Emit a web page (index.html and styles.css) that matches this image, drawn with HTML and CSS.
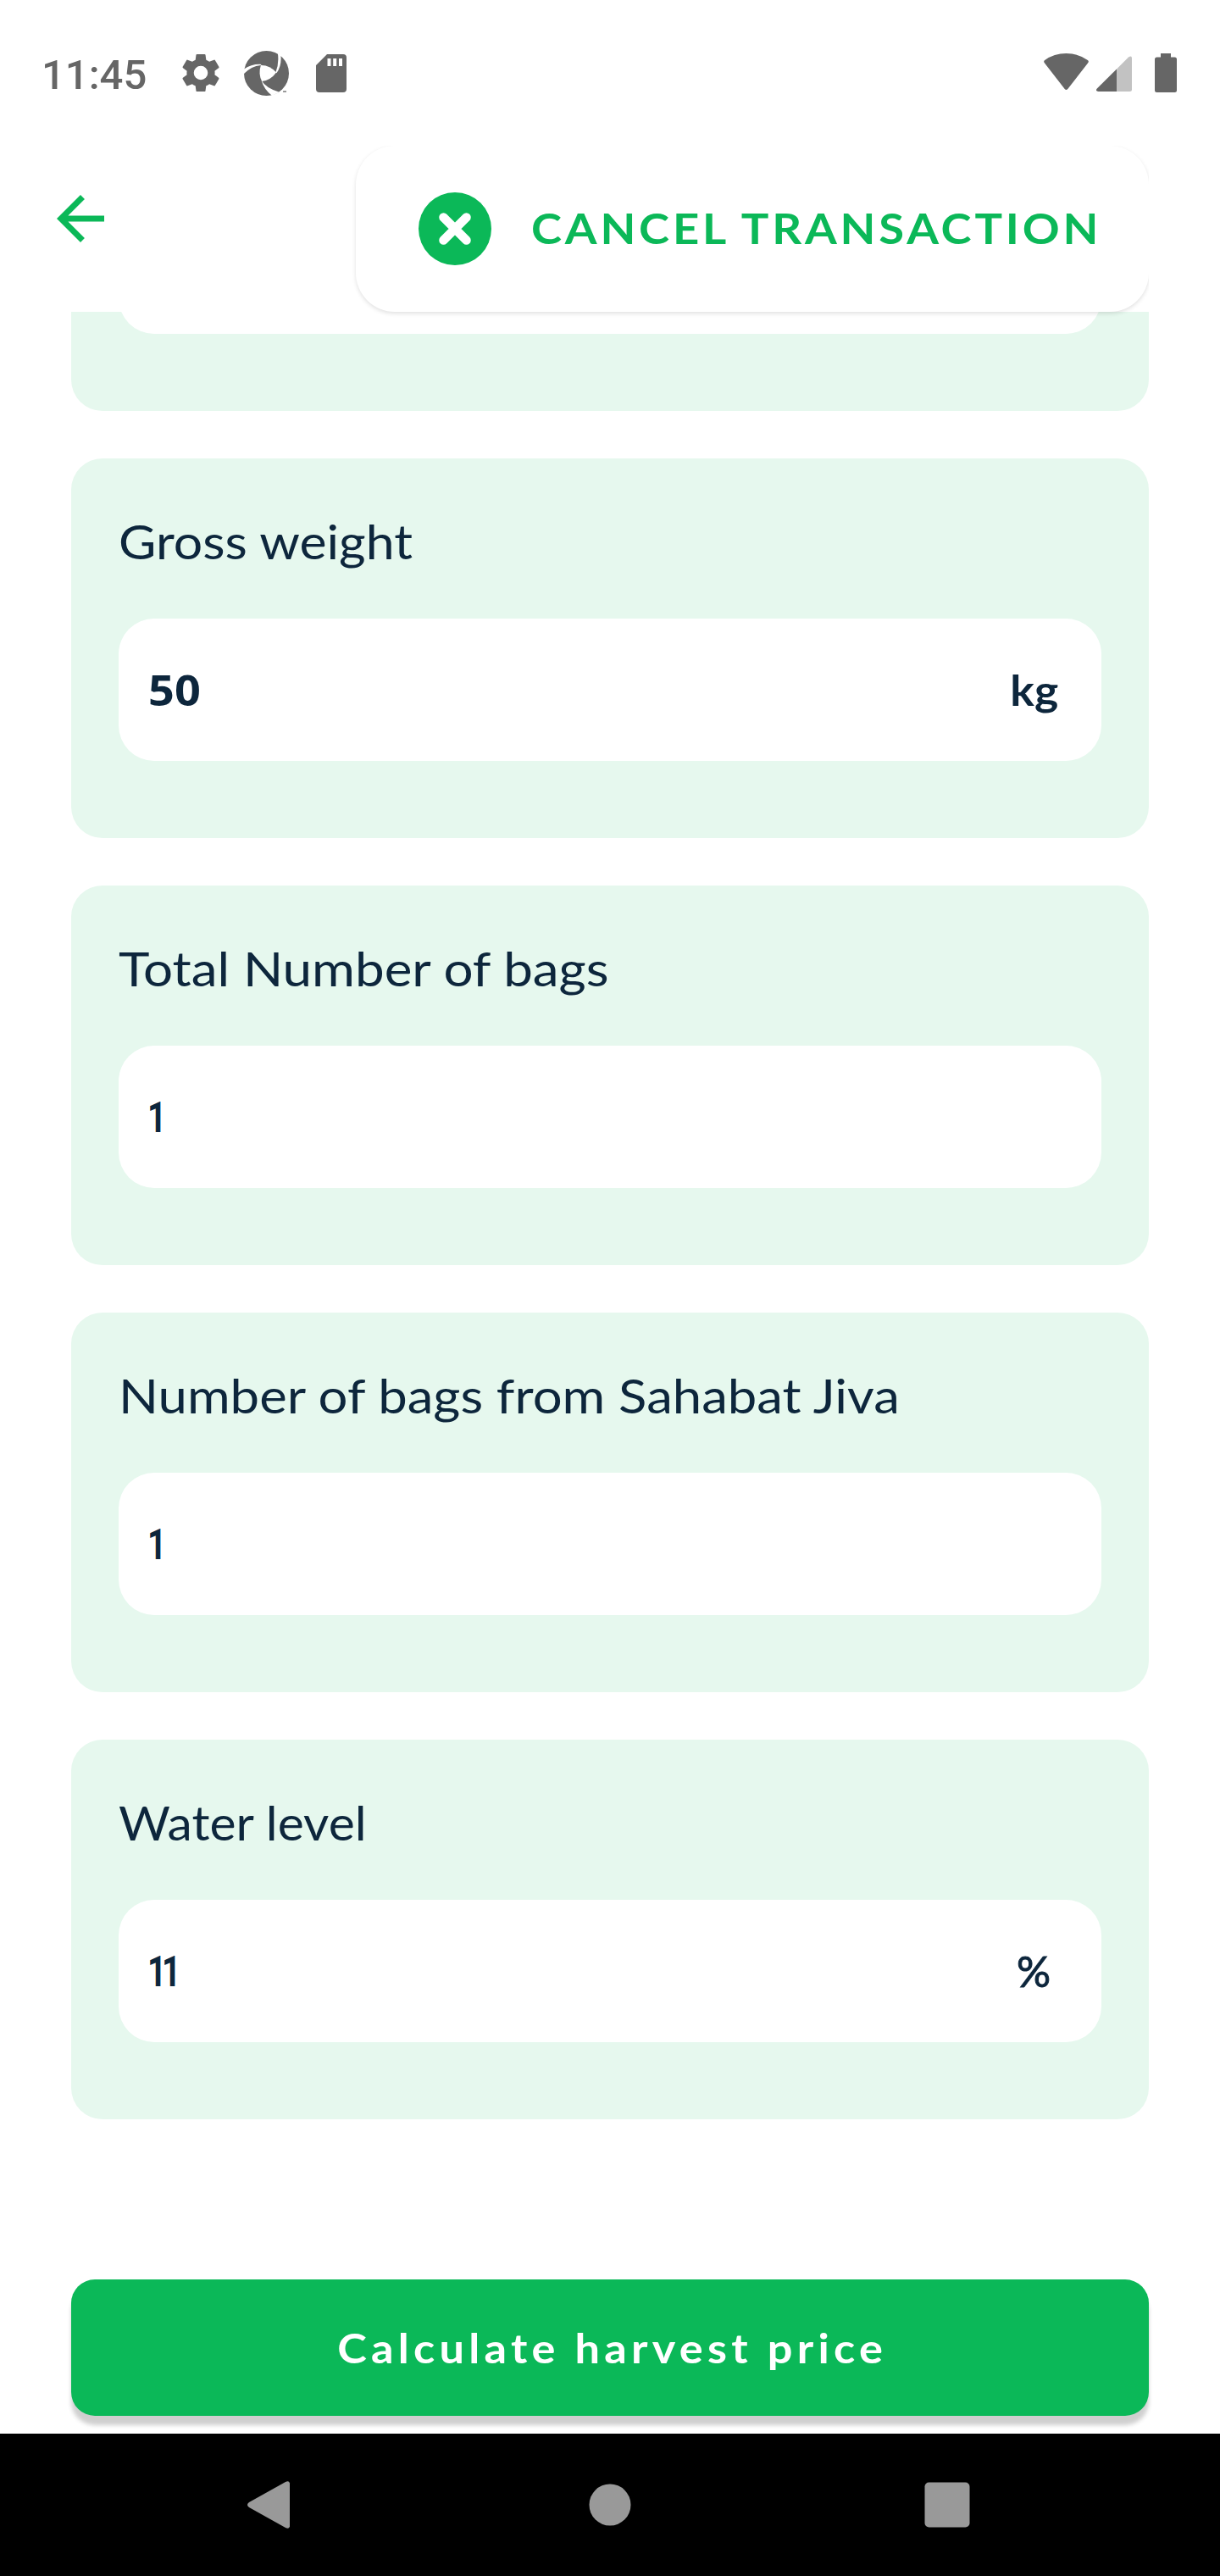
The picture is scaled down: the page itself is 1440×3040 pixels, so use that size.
FILE: index.html
```html
<!DOCTYPE html>
<html lang="en">
<head>
<meta charset="utf-8">
<title>Harvest transaction</title>
<link rel="stylesheet" href="styles.css">
</head>
<body>
<div class="screen">
  <header class="status">
    <span class="clock">11:45</span>
    <svg class="gear" viewBox="2 2 20 20"><path d="M19.14 12.94c.04-.3.06-.61.06-.94s-.02-.64-.07-.94l2.03-1.58a.49.49 0 0 0 .12-.61l-1.92-3.32a.488.488 0 0 0-.59-.22l-2.39.96c-.5-.38-1.03-.7-1.62-.94L14.4 2.81a.484.484 0 0 0-.48-.41h-3.84a.47.47 0 0 0-.47.41l-.36 2.54c-.59.24-1.13.57-1.62.94l-2.39-.96a.48.48 0 0 0-.59.22L2.74 8.87c-.12.21-.08.47.12.61l2.03 1.58c-.05.3-.09.63-.09.94s.02.64.07.94l-2.03 1.58a.49.49 0 0 0-.12.61l1.92 3.32c.12.22.37.29.59.22l2.39-.96c.5.38 1.03.7 1.62.94l.36 2.54c.05.24.24.41.48.41h3.84c.24 0 .44-.17.47-.41l.36-2.54c.59-.24 1.13-.56 1.62-.94l2.39.96c.22.08.47 0 .59-.22l1.92-3.32a.48.48 0 0 0-.12-.61zM12 15.6a3.6 3.6 0 1 1 0-7.2 3.6 3.6 0 0 1 0 7.2z"/></svg>
    <svg class="rotor" viewBox="0 0 160 160"><circle cx="80" cy="80" r="80"/><path class="cut" d="M60 51Q92 50 115 77Q96 104 64 109Q50 82 60 51Z"/><path class="cut" d="M-2 66Q26 46 62 48L60 51Q24 54-2 84ZM120 6L131 16Q135 53 116 79L113 76Q126 44 120 6ZM62 106Q80 135 126 147L100 160Q72 139 62 106Z"/><path d="M139 143h12v4h-12z"/></svg>
    <svg class="card-icon" viewBox="0 0 36 45"><path fill-rule="evenodd" d="M13 0H32a4 4 0 0 1 4 4V41a4 4 0 0 1-4 4H4a4 4 0 0 1-4-4V13ZM13.500 5v9h4V5ZM20.200 5v9h4V5ZM27 5v9h4V5Z"/></svg>
    <span class="spacer"></span>
    <svg class="wifi" viewBox="0 0 53 43"><path d="M1 11.500Q-.8 9.500 1.200 8Q12 0 26.500 0T51.800 8Q53.800 9.500 52 11.500L28.300 42Q26.500 43.800 24.700 42Z"/></svg>
    <svg class="signal" viewBox="0 0 42 42"><path class="weak" d="M24 15.500 38 1.500Q42-1 42 3V39.500Q42 42 39.500 42H24Z"/><path d="M24 15.500V42H2.500Q-1.500 41.500.8 38.500Z"/></svg>
    <svg class="battery" viewBox="0 0 26 46"><path d="M7 0H19V4.500H23.500Q26 4.500 26 7V43.500Q26 46 23.500 46H2.500Q0 46 0 43.500V7Q0 4.500 2.500 4.500H7Z"/></svg>
  </header>

  <nav class="toolbar">
    <svg class="back" viewBox="0 0 24 24"><path d="M20 11H7.830l5.590-5.590L12 4l-8 8 8 8 1.410-1.410L7.830 13H20z"/></svg>
    <div class="cancel-wrap">
      <button class="cancel">
        <svg class="close" viewBox="0 0 86 86"><circle cx="43" cy="43" r="43"/><path d="M29.500 29.500 56.500 56.500M56.500 29.500 29.500 56.500"/></svg>
        <span class="cancel-text">CANCEL TRANSACTION</span>
      </button>
    </div>
  </nav>

  <main class="list">
    <section class="card clipped"><div class="field"></div></section>
    <section class="card">
      <h2 class="gross">Gross weight</h2>
      <div class="field"><b class="num">50</b><b class="kg">kg</b></div>
    </section>
    <section class="card">
      <h2 class="total">Total Number of bags</h2>
      <div class="field"><b class="num ones">1</b></div>
    </section>
    <section class="card">
      <h2 class="sahabat">Number of bags from Sahabat Jiva</h2>
      <div class="field"><b class="num ones">1</b></div>
    </section>
    <section class="card">
      <h2 class="water">Water level</h2>
      <div class="field"><b class="num ones">11</b><span class="percent">%</span></div>
    </section>
  </main>

  <div class="action"><button class="calculate"><span class="calc-text">Calculate harvest price</span></button></div>

  <footer class="nav">
    <svg viewBox="0 0 60 60"><path d="M55 4.500V55.500Q54 59 50 57L7 33Q3 30 7 27L50 3Q54 1 55 4.500Z"/></svg>
    <svg class="home" viewBox="0 0 60 60"><circle cx="30" cy="30" r="24.500"/></svg>
    <svg viewBox="0 0 60 60"><rect x="3.500" y="3.500" width="53" height="53" rx="5"/></svg>
  </footer>
</div>
</body>
</html>
```

FILE: styles.css
```css
* { box-sizing: border-box; }
body { margin: 0; background: #fff; }
svg { display: block; flex: none; }
button { border: 0; padding: 0; font: inherit; color: inherit; }

.screen {
  width: 1440px;
  height: 3040px;
  display: flex;
  flex-direction: column;
  overflow: hidden;
  font-family: Lato, "Open Sans", sans-serif;
  color: #0d263c;
  white-space: nowrap;
}

.status {
  height: 172px;
  padding: 60px 51px 0 49px;
  display: flex;
  align-items: flex-start;
  fill: #666;
}
.clock {
  width: 166px;
  padding-top: 5px;
  font: 500 49px/48px Roboto, sans-serif;
  letter-spacing: 0;
  color: #666;
}
.gear { width: 46px; height: 46px; margin: 3px 27px 0 -1px; }
.rotor { width: 53px; height: 53px; margin-left: 1px; }
.cut { fill: #fff; }
.card-icon { width: 36px; height: 45px; margin: 4px 0 0 32px; }
.spacer { flex: 1; }
.wifi { width: 53px; height: 43px; margin-top: 3px; }
.signal { width: 42px; height: 42px; margin: 6px 27px 0 9px; }
.weak { fill: #c2c2c2; }
.battery { width: 26px; height: 46px; margin-top: 3px; }

.toolbar {
  height: 196px;
  padding-left: 53px;
  display: flex;
  justify-content: space-between;
  position: relative;
  z-index: 1;
}
.back { width: 84px; height: 84px; margin-top: 44px; fill: #0bb858; }
/* The wrapper cuts the shadow off at the top and right edges of the button. */
.cancel-wrap {
  width: 946px;
  height: 220px;
  padding-left: 10px;
  margin-right: 84px;
  overflow: hidden;
}
.cancel {
  width: 936px;
  height: 196px;
  padding-left: 74px;
  display: flex;
  align-items: center;
  border-radius: 46px;
  background: #fff;
  box-shadow: 0 2px 5px rgba(0, 0, 0, 0.12);
  color: #0bb858;
  font-weight: 700;
  font-size: 50px;
}
.close { width: 86px; height: 86px; margin-right: 47px; fill: #0bb858; }
.close path { stroke: #fff; stroke-width: 10.5; stroke-linecap: round; }
.cancel-text {
  margin-bottom: 2px;
  letter-spacing: 3.5px;
  transform: scaleX(1.088);
  transform-origin: left;
}

.list {
  height: 2322px;
  display: flex;
  flex-direction: column;
  gap: 56px;
  padding: 0 84px;
}
.card {
  height: 448px;
  flex: none;
  padding: 0 56px;
  border-radius: 37px;
  background: #e6f8ee;
}
.clipped { height: 117px; border-radius: 0 0 37px 37px; overflow: hidden; }
.clipped .field { margin-top: -142px; }
h2 {
  height: 189px;
  margin: 0;
  padding-top: 63px;
  font-weight: 400;
  font-size: 56px;
  line-height: 70px;
  transform-origin: left;
}
.gross { transform: scaleX(1.085); }
.total { transform: scaleX(1.105); }
.sahabat { transform: scaleX(1.101); }
.water { transform: scaleX(1.051); }
.field {
  height: 168px;
  padding: 0 51px 0 35px;
  border-radius: 42px;
  background: #fff;
  display: flex;
  justify-content: space-between;
  align-items: center;
  font-size: 50px;
}
.num {
  font-family: "Open Sans", sans-serif;
  font-weight: 700;
  transform: scaleX(1.08);
  transform-origin: left;
}
.ones {
  margin-left: -1px;
  padding-top: 2px;
  font-family: Roboto, sans-serif;
  letter-spacing: -7px;
  transform: scaleX(0.78);
}
.kg { transform: scaleX(1.07); transform-origin: right; }
.percent { margin-right: 9px; -webkit-text-stroke: 1px #0d263c; }

.action { height: 182px; padding: 0 84px; overflow: hidden; }
.calculate {
  display: block;
  width: 1272px;
  height: 161px;
  border-radius: 28px;
  background: #0bb858;
  box-shadow: 0 11px 5px rgba(0, 0, 0, 0.19);
  color: #fff;
  font-weight: 700;
  font-size: 48px;
}
.calc-text {
  display: inline-block;
  margin-right: -6px;
  letter-spacing: 4.8px;
  transform: scaleX(1.09);
}

.nav {
  height: 168px;
  background: #000;
  display: flex;
  justify-content: space-between;
  align-items: center;
  padding: 0 292px 0 287px;
  fill: #999;
}
.nav svg { width: 60px; height: 60px; }
.nav .home { margin-left: 4px; }
```
